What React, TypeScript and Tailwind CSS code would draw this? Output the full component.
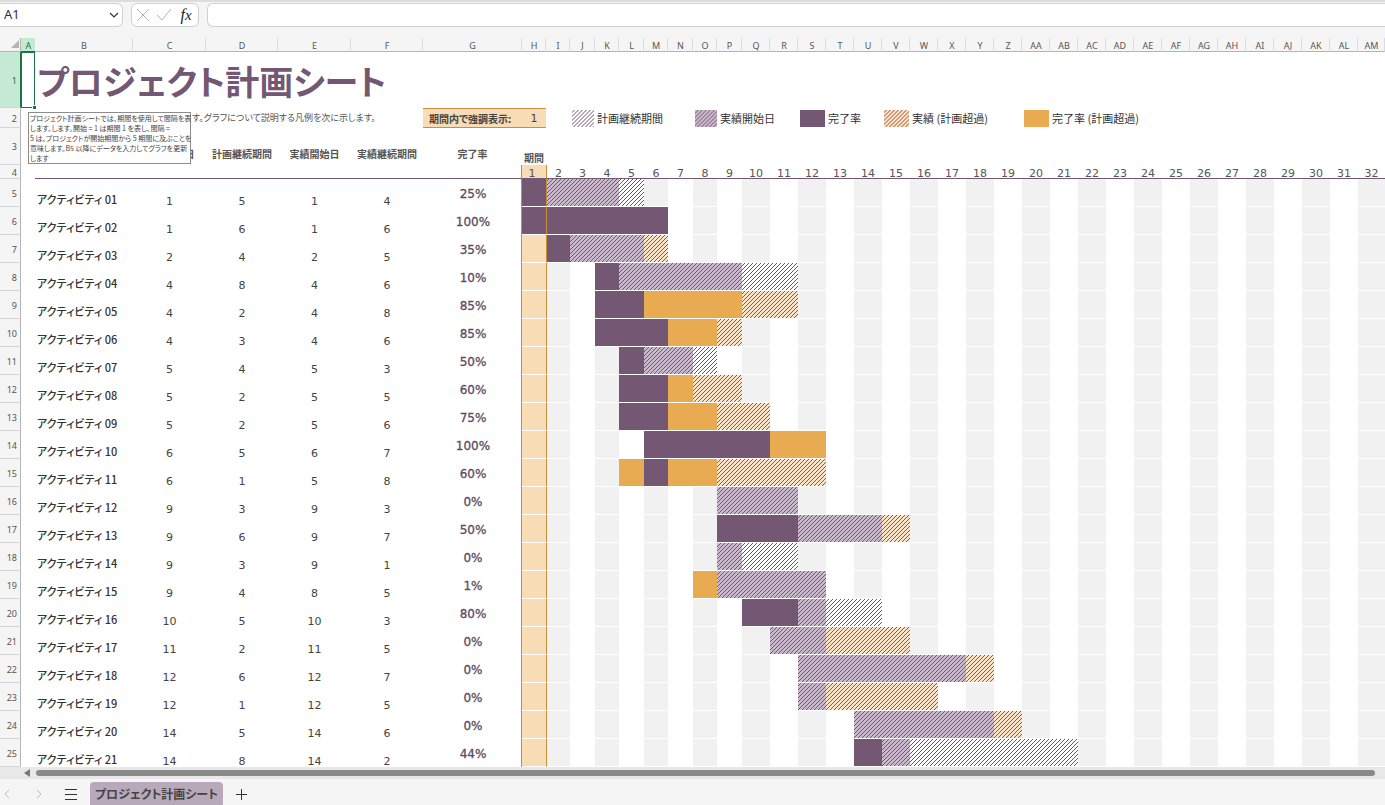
import React from "react";

type Fill = "plan" | "actual" | "done" | "over" | "overDone";

interface Activity {
  name: string;
  values: [number, number, number, number];
  percent: string;
  // [first period, last period, fill]
  bars: [number, number, Fill][];
}

const LATIN = "font-['DejaVu_Sans','Noto_Sans_CJK_JP',sans-serif]";
const HEADING = "font-['Noto_Sans',sans-serif]";
const JP = "font-['Noto_Sans_CJK_JP',sans-serif] [font-feature-settings:'palt']";

// Hatches are attached to the viewport so that they run on from cell to cell
const fills: Record<Fill, string> = {
  plan: "bg-white bg-fixed bg-[linear-gradient(135deg,transparent_44%,#6b4f6c_44%,#6b4f6c_56%,transparent_56%)] bg-[length:4px_4px]",
  actual:
    "bg-[#cab8cd] bg-fixed bg-[linear-gradient(135deg,transparent_44%,#735773_44%,#735773_56%,transparent_56%)] bg-[length:4px_4px]",
  done: "bg-[#735773]",
  over: "bg-[#fae3c6] bg-fixed bg-[linear-gradient(135deg,transparent_44%,#a0503f_44%,#a0503f_56%,transparent_56%)] bg-[length:4px_4px]",
  overDone: "bg-[#e8ab51]",
};

const activities: Activity[] = [
  { name: "アクティビティ 01", values: [1, 5, 1, 4], percent: "25%", bars: [[1, 1, "done"], [2, 4, "actual"], [5, 5, "plan"]] },
  { name: "アクティビティ 02", values: [1, 6, 1, 6], percent: "100%", bars: [[1, 6, "done"]] },
  { name: "アクティビティ 03", values: [2, 4, 2, 5], percent: "35%", bars: [[2, 2, "done"], [3, 5, "actual"], [6, 6, "over"]] },
  { name: "アクティビティ 04", values: [4, 8, 4, 6], percent: "10%", bars: [[4, 4, "done"], [5, 9, "actual"], [10, 11, "plan"]] },
  { name: "アクティビティ 05", values: [4, 2, 4, 8], percent: "85%", bars: [[4, 5, "done"], [6, 9, "overDone"], [10, 11, "over"]] },
  { name: "アクティビティ 06", values: [4, 3, 4, 6], percent: "85%", bars: [[4, 6, "done"], [7, 8, "overDone"], [9, 9, "over"]] },
  { name: "アクティビティ 07", values: [5, 4, 5, 3], percent: "50%", bars: [[5, 5, "done"], [6, 7, "actual"], [8, 8, "plan"]] },
  { name: "アクティビティ 08", values: [5, 2, 5, 5], percent: "60%", bars: [[5, 6, "done"], [7, 7, "overDone"], [8, 9, "over"]] },
  { name: "アクティビティ 09", values: [5, 2, 5, 6], percent: "75%", bars: [[5, 6, "done"], [7, 8, "overDone"], [9, 10, "over"]] },
  { name: "アクティビティ 10", values: [6, 5, 6, 7], percent: "100%", bars: [[6, 10, "done"], [11, 12, "overDone"]] },
  { name: "アクティビティ 11", values: [6, 1, 5, 8], percent: "60%", bars: [[5, 5, "overDone"], [6, 6, "done"], [7, 8, "overDone"], [9, 12, "over"]] },
  { name: "アクティビティ 12", values: [9, 3, 9, 3], percent: "0%", bars: [[9, 11, "actual"]] },
  { name: "アクティビティ 13", values: [9, 6, 9, 7], percent: "50%", bars: [[9, 11, "done"], [12, 14, "actual"], [15, 15, "over"]] },
  { name: "アクティビティ 14", values: [9, 3, 9, 1], percent: "0%", bars: [[9, 9, "actual"], [10, 11, "plan"]] },
  { name: "アクティビティ 15", values: [9, 4, 8, 5], percent: "1%", bars: [[8, 8, "overDone"], [9, 12, "actual"]] },
  { name: "アクティビティ 16", values: [10, 5, 10, 3], percent: "80%", bars: [[10, 11, "done"], [12, 12, "actual"], [13, 14, "plan"]] },
  { name: "アクティビティ 17", values: [11, 2, 11, 5], percent: "0%", bars: [[11, 12, "actual"], [13, 15, "over"]] },
  { name: "アクティビティ 18", values: [12, 6, 12, 7], percent: "0%", bars: [[12, 17, "actual"], [18, 18, "over"]] },
  { name: "アクティビティ 19", values: [12, 1, 12, 5], percent: "0%", bars: [[12, 12, "actual"], [13, 16, "over"]] },
  { name: "アクティビティ 20", values: [14, 5, 14, 6], percent: "0%", bars: [[14, 18, "actual"], [19, 19, "over"]] },
  { name: "アクティビティ 21", values: [14, 8, 14, 2], percent: "44%", bars: [[14, 14, "done"], [15, 15, "actual"], [16, 21, "plan"]] },
];

const legend: { label: string; fill: Fill; width: string; swatch: string }[] = [
  { label: "計画継続期間", fill: "plan", width: "w-[123px]", swatch: "w-[22px]" },
  { label: "実績開始日", fill: "actual", width: "w-[105px]", swatch: "w-[22px]" },
  { label: "完了率", fill: "done", width: "w-[84px]", swatch: "w-[25px]" },
  { label: "実績 (計画超過)", fill: "over", width: "w-[140px]", swatch: "w-[25px]" },
  { label: "完了率 (計画超過)", fill: "overDone", width: "w-[140px]", swatch: "w-[25px]" },
];

const periods = Array.from({ length: 32 }, (_, i) => i + 1);

const columnLetters = Array.from({ length: 39 }, (_, i) =>
  i < 26 ? String.fromCharCode(65 + i) : "A" + String.fromCharCode(39 + i)
);

const columnWidths = [
  "w-[21px]", "w-[14px]", "w-[98px]", "w-[73px]", "w-[72px]", "w-[73px]", "w-[72px]", "w-[99px]",
  "w-[24px]", "w-[24px]", "w-[25px]", "w-[24px]", "w-[25px]", "w-[24px]", "w-[25px]", "w-[24px]", "w-[25px]",
  ...Array(22).fill("w-[28px]"),
];

function fillAt(activity: Activity, period: number): string {
  const bar = activity.bars.find(([from, to]) => period >= from && period <= to);
  if (bar) return fills[bar[2]];
  if (period === 1) return "bg-[#f7dcb6]";
  return period % 2 === 0 ? "bg-[#f1f1f1]" : "bg-white";
}

function RowHeader({ n, active = false }: { n: number; active?: boolean }) {
  return (
    <th
      scope="row"
      className={`border-r border-b border-b-[#d6d6d6] p-0 pt-0.5 pr-[3px] text-right text-[9px] leading-[10px] font-normal ${HEADING} ${
        active ? "border-r-[#1e7145] bg-[#c5ead4] text-[#1e7145]" : "border-r-[#b5b5b5] bg-[#f5f5f5] text-[#555]"
      }`}
    >
      {n}
    </th>
  );
}

function FormulaBar() {
  return (
    <header className="flex h-[38px] items-start gap-2 border-t-2 border-[#dcdcdc] bg-[#f5f5f5] pt-px">
      <div className="flex h-6 w-[123px] items-center justify-between rounded-r-md border border-l-0 border-[#d0d0d0] bg-white pr-[3px] pl-1">
        <input
          aria-label="名前ボックス"
          defaultValue="A1"
          className={`w-16 bg-transparent text-[13px] text-[#333] outline-none ${HEADING}`}
        />
        <button aria-label="名前の一覧">
          <svg width="10" height="10" viewBox="0 0 10 10" fill="none" stroke="#333" strokeWidth="1.2">
            <path d="M1 3l4 4 4-4" />
          </svg>
        </button>
      </div>
      <div className="flex h-6 w-[68px] items-center justify-between rounded-md border border-[#d0d0d0] bg-white px-1">
        <button aria-label="キャンセル">
          <svg width="14" height="14" viewBox="0 0 14 14" fill="none" stroke="#b5b5b5">
            <path d="M1 1l12 12M13 1L1 13" />
          </svg>
        </button>
        <button aria-label="入力">
          <svg width="16" height="14" viewBox="0 0 16 14" fill="none" stroke="#b5b5b5">
            <path d="M1 7l5 5L15 1" />
          </svg>
        </button>
        <button
          aria-label="関数の挿入"
          className="w-4 font-['Liberation_Serif',serif] text-base leading-5 whitespace-nowrap text-[#222] italic"
        >
          f<span className="text-[15px]">x</span>
        </button>
      </div>
      <input
        aria-label="数式バー"
        className="h-6 min-w-0 flex-1 rounded-l-md border border-r-0 border-[#d0d0d0] bg-white px-2 text-xs outline-none"
      />
    </header>
  );
}

function Legend() {
  return (
    <div className={`flex items-center text-[11px] leading-[18px] text-[#333] ${JP}`}>
      {legend.map(({ label, fill, width, swatch }) => (
        <div key={label} className={`flex shrink-0 items-center gap-[3px] whitespace-nowrap ${width}`}>
          <span className={`h-[17px] ${swatch} ${fills[fill]}`} />
          {label}
        </div>
      ))}
    </div>
  );
}

function Sheet() {
  return (
    <table className="w-full table-fixed border-separate border-spacing-0">
      <colgroup>
        {columnWidths.map((width, i) => (
          <col key={i} className={width} />
        ))}
        <col />
      </colgroup>
      <thead>
        <tr className={`h-[14px] bg-[#f5f5f5] text-[9px] leading-[10px] text-[#555] ${HEADING}`}>
          <th aria-label="すべて選択" className="border-r border-b border-[#b5b5b5] p-0">
            <svg width="9" height="9" viewBox="0 0 9 9" className="ml-auto" fill="#b5b5b5">
              <path d="M8 0v8H0z" />
            </svg>
          </th>
          {columnLetters.map((letter, i) => (
            <th
              key={letter}
              scope="col"
              className={`border-b p-0 pt-0.5 pl-px font-normal ${
                i === 0
                  ? "border-[#1e7145] bg-[#c5ead4] text-[#1e7145]"
                  : "border-r border-r-[#dcdcdc] border-b-[#b5b5b5]"
              }`}
            >
              {letter}
            </th>
          ))}
        </tr>
      </thead>
      <tbody>
        <tr className="h-[56px]">
          <RowHeader n={1} active />
          <td className="relative p-0">
            <div className="absolute inset-0 border border-[#1e7145]" />
            <div className="absolute -right-px -bottom-px size-1 border-t border-l border-white bg-[#1e7145]" />
          </td>
          <td colSpan={38} className="p-0 pt-0.5 pl-0.5">
            <h1 className={`text-[34px] leading-[54px] font-bold whitespace-nowrap text-[#735773] ${JP}`}>
              プロジェクト計画シート
            </h1>
          </td>
        </tr>
        <tr className="h-5">
          <RowHeader n={2} />
          <td className="relative p-0">
            <div
              className={`absolute top-1 left-[7px] z-10 h-[52px] w-[163px] border border-[#8c8c8c] bg-white pl-px text-[7px] leading-[10px] whitespace-nowrap text-[#444] ${JP}`}
            >
              プロジェクト計画シートでは、期間を使用して間隔を表
              <br />
              します。します。開始 = 1 は期間 1 を表し、間隔 =
              <br />
              5 は、プロジェクトが開始期間から 5 期間に及ぶことを
              <br />
              意味します。B5 以降にデータを入力してグラフを更新
              <br />
              します
            </div>
          </td>
          <td colSpan={5} className={`p-0 pl-[157px] text-[9px] leading-[18px] whitespace-nowrap text-[#555] ${JP}`}>
            す。グラフについて説明する凡例を次に示します。
          </td>
          <td
            colSpan={2}
            className={`border-y border-[#c78f3d] bg-[#f7dcb6] p-0 text-[10px] text-[#444] ${JP}`}
          >
            <label className="flex items-center pt-0.5 pl-1.5">
              <span className="w-[93px] leading-4 font-bold whitespace-nowrap">期間内で強調表示:</span>
              <input
                defaultValue="1"
                className={`w-6 bg-transparent text-center text-[11px] leading-4 outline-none ${LATIN}`}
              />
            </label>
          </td>
          <td colSpan={31} className="p-0 pl-[26px]">
            <Legend />
          </td>
        </tr>
        <tr className={`h-[37px] text-[10px] leading-4 whitespace-nowrap text-[#555] ${JP}`}>
          <RowHeader n={3} />
          <td />
          <td />
          <td className="p-0 pt-3.5 text-center font-bold">計画開始日</td>
          <td className="p-0 pt-3.5 text-center font-bold">計画継続期間</td>
          <td className="p-0 pt-3.5 text-center font-bold">実績開始日</td>
          <td className="p-0 pt-3.5 text-center font-bold">実績継続期間</td>
          <td className="p-0 pt-3.5 text-center font-bold">完了率</td>
          <td colSpan={32} className="p-0 pb-px pl-0.5 align-bottom leading-3 font-bold">
            期間
          </td>
        </tr>
        <tr className="h-[14px] text-[11px] leading-[9px] text-[#555]">
          <RowHeader n={4} />
          <td />
          <td colSpan={6} className="border-r border-b border-r-[#c78f3d] border-b-[#735773] p-0" />
          {periods.map((period) => (
            <td
              key={period}
              className={`border-b border-b-[#735773] p-0 text-center align-bottom ${
                period === 1 ? "bg-[#f7dcb6] pr-1" : ""
              } ${period === 2 ? "border-l border-l-[#c78f3d]" : ""}`}
            >
              {period}
            </td>
          ))}
        </tr>
        {activities.map((activity, row) => (
          <tr key={activity.name} className="h-7 text-[11px] text-[#444]">
            <RowHeader n={row + 5} />
            <td />
            <td className={`p-0 pl-0.5 align-bottom text-[11px] leading-[15px] font-medium whitespace-nowrap text-[#333] ${JP}`}>
              {activity.name}
            </td>
            {activity.values.map((value, i) => (
              <td key={i} className="p-0 text-center align-bottom leading-[11px]">
                {value}
              </td>
            ))}
            <td className="border-r border-r-[#c78f3d] p-0 pt-0.5 pl-0.5 text-center text-xs leading-4 text-[#5d4a62] [-webkit-text-stroke:0.3px]">
              {activity.percent}
            </td>
            {periods.map((period) => (
              <td
                key={period}
                className={`border-b border-b-white p-0 ${fillAt(activity, period)} ${
                  period === 2 ? "border-l border-l-[#c78f3d]" : ""
                }`}
              />
            ))}
          </tr>
        ))}
      </tbody>
    </table>
  );
}

function SheetTabs() {
  return (
    <footer className="bg-[#f5f5f5]">
      <div className="flex h-3 items-center gap-1.5 bg-[#e8e8e8] pr-2.5 pl-6">
        <svg width="6" height="8" viewBox="0 0 6 8" fill="#777">
          <path d="M6 0v8L0 4z" />
        </svg>
        <div className="h-1.5 flex-1 rounded-full bg-[#8a8a8a]" />
      </div>
      <nav className="flex h-[27px] items-end">
        <div className="flex h-6 w-[90px] items-center">
          <button aria-label="前のシート" className="ml-1">
            <svg width="6" height="10" viewBox="0 0 6 10" fill="none" stroke="#bbb">
              <path d="M5 1L1 5l4 4" />
            </svg>
          </button>
          <button aria-label="次のシート" className="ml-[26px]">
            <svg width="6" height="10" viewBox="0 0 6 10" fill="none" stroke="#bbb">
              <path d="M1 1l4 4-4 4" />
            </svg>
          </button>
          <button aria-label="すべてのシート" className="ml-[23px]">
            <svg width="12" height="11" viewBox="0 0 12 11" stroke="#333">
              <path d="M0 .5h12M0 5.5h12M0 10.5h12" />
            </svg>
          </button>
        </div>
        <button
          className={`h-6 w-[133px] rounded-t-sm bg-[#b8a9ba] text-xs leading-6 font-bold whitespace-nowrap text-[#444] ${JP}`}
        >
          プロジェクト計画シート
        </button>
        <button aria-label="新しいシート" className="ml-[13px] flex h-6 items-center">
          <svg width="11" height="11" viewBox="0 0 11 11" stroke="#333">
            <path d="M5.5 0v11M0 5.5h11" />
          </svg>
        </button>
      </nav>
    </footer>
  );
}

export default function App() {
  return (
    <div className={`flex min-h-screen flex-col overflow-hidden bg-white ${LATIN}`}>
      <FormulaBar />
      <main className="flex-1">
        <Sheet />
      </main>
      <SheetTabs />
    </div>
  );
}
